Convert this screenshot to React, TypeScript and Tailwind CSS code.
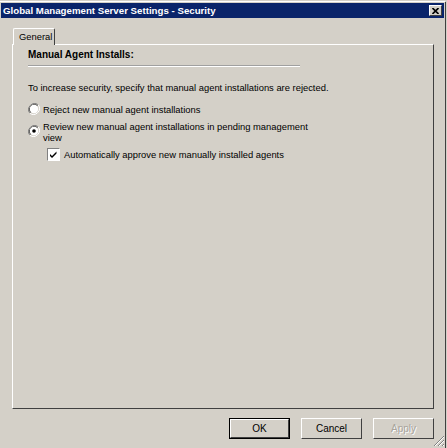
import React from "react";

const font = { fontFamily: '"Liberation Sans", Arial, sans-serif' };

function Radio({ checked }: { checked?: boolean }) {
  return (
    <svg width="12" height="12" viewBox="0 0 12 12" className="shrink-0">
      <path d="M10.2 1.8 A6 6 0 0 0 1.8 10.2" stroke="#808080" strokeWidth="1" fill="none" />
      <path d="M9.5 2.5 A5 5 0 0 0 2.5 9.5" stroke="#404040" strokeWidth="1" fill="none" />
      <path d="M1.8 10.2 A6 6 0 0 0 10.2 1.8" stroke="#ffffff" strokeWidth="1" fill="none" />
      <circle cx="6" cy="6" r="4.2" fill="#ffffff" />
      {checked && <circle cx="6" cy="6" r="1.8" fill="#000000" />}
    </svg>
  );
}

function Check() {
  return (
    <div className="w-[13px] h-[13px] shrink-0 bg-white border-t border-l border-[#808080] border-r border-b border-r-white border-b-white flex items-center justify-center">
      <svg width="9" height="9" viewBox="0 0 9 9">
        <path d="M1 4 L3 6 L7.5 1.5 L7.5 3.5 L3 8 L1 6 Z" fill="#000" />
      </svg>
    </div>
  );
}

function Btn({ label, def, disabled }: { label: string; def?: boolean; disabled?: boolean }) {
  return (
    <div className={"w-[61px] h-[21px] " + (def ? "border border-black" : "")}>
      <div className="w-full h-full bg-[#d4d0c8] border border-t-white border-l-white border-r-[#404040] border-b-[#404040] flex items-center justify-center">
        <span
          className={"text-[10px] leading-none " + (disabled ? "text-[#a8a49c]" : "text-black")}
          style={disabled ? { textShadow: "1px 1px 0 #ffffff" } : undefined}
        >
          {label}
        </span>
      </div>
    </div>
  );
}

export default function App() {
  return (
    <div style={font} className="w-[447px] h-[448px] bg-[#d4d0c8] flex flex-col overflow-hidden">
      <div className="h-[2px] border-t border-[#d4d0c8] border-b border-b-white mr-[2px]" />
      <div className="flex-1 flex flex-col mr-[1px] border-r border-[#404040]">
        <div className="mt-[1px] ml-[1px] mr-[1px] h-[15px] bg-[#0a246a] flex items-center justify-between pl-[2px] pr-[2px]">
          <span className="text-white font-bold text-[9.7px] leading-none">Global Management Server Settings - Security</span>
          <div className="w-[13px] h-[11px] bg-[#d4d0c8] border border-t-white border-l-white border-r-[#404040] border-b-[#404040] flex items-center justify-center">
            <svg width="7" height="6" viewBox="0 0 7 6">
              <path d="M0.5 0 L6.5 6 M6.5 0 L0.5 6" stroke="#000" strokeWidth="1.6" />
            </svg>
          </div>
        </div>
        <div className="flex-1 flex flex-col pl-[12px] pr-[11px] pt-[10px]">
          <div className="flex">
            <div className="ml-[1px] w-[42px] h-[17px] border-t border-l border-white border-r border-r-[#404040] rounded-t-[2px] flex items-center pl-[5px] relative z-10 bg-[#d4d0c8] -mb-[1px]">
              <span className="text-[9.4px] leading-none text-black">General</span>
            </div>
          </div>
          <div className="h-[365px] border-t border-l border-white border-r border-b border-r-[#404040] border-b-[#404040] flex flex-col pl-[15px] pt-[4px]">
            <div className="text-[10px] font-bold text-black leading-[12px]">Manual Agent Installs:</div>
            <div className="mt-[4px] w-[272px] h-[2px] border-t border-[#a0a0a0] border-b border-b-white" />
            <div className="mt-[15px] text-[9.4px] text-black leading-[11px]">
              To increase security, specify that manual agent installations are rejected.
            </div>
            <div className="mt-[10px] flex items-center gap-[3px]">
              <Radio />
              <span className="text-[9.4px] leading-[11px]">Reject new manual agent installations</span>
            </div>
            <div className="mt-[6px] flex items-start gap-[3px]">
              <div className="mt-[4px]"><Radio checked /></div>
              <span className="text-[9.4px] leading-[11px] w-[270px]">
                Review new manual agent installations in pending management view
              </span>
            </div>
            <div className="mt-[5px] ml-[19px] flex items-center gap-[4px]">
              <Check />
              <span className="text-[9.4px] leading-[11px]">Automatically approve new manually installed agents</span>
            </div>
          </div>
          <div className="mt-[9px] flex justify-end gap-[11px]">
            <Btn label="OK" def />
            <Btn label="Cancel" />
            <Btn label="Apply" disabled />
          </div>
          <div className="flex-1 relative">
            <svg width="12" height="12" viewBox="0 0 12 12" className="absolute right-[-11px] bottom-[1px]">
              <path d="M11 1 L1 11 M11 5 L5 11 M11 9 L9 11" stroke="#808080" strokeWidth="1" />
              <path d="M11 2 L2 11 M11 6 L6 11 M11 10 L10 11" stroke="#ffffff" strokeWidth="1" />
            </svg>
          </div>
        </div>
      </div>
    </div>
  );
}
